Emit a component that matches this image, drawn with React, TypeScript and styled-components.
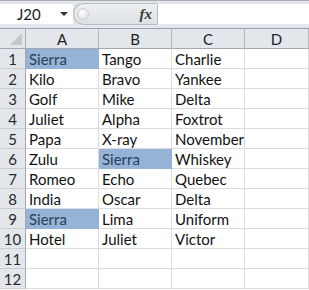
import { createGlobalStyle } from "styled-components";
import styled from "styled-components";

const GlobalStyle = createGlobalStyle`
  body {
    margin: 0;
    background: #ffffff;
    font-family: Lato, "Liberation Sans", sans-serif;
  }
`;

const Window = styled.div`
  width: 309px;
  height: 290px;
  overflow: hidden;
  background: #ffffff;
`;

const FormulaBar = styled.div`
  display: flex;
  align-items: center;
  height: 29px;
  box-sizing: border-box;
  padding: 3px 0 4px 0;
  background: #e3e6ea;
  border-top: 1px solid #a9adb3;
  border-bottom: 1px solid #9ea2a8;
`;

const NameBox = styled.div`
  width: 73px;
  height: 20px;
  box-sizing: border-box;
  background: #ffffff;
  display: flex;
  align-items: center;
  padding-left: 17px;
  font-size: 15px;
  color: #1a1a1a;
  position: relative;
`;

const DropArrow = styled.span`
  position: absolute;
  left: 60px;
  top: 8px;
  width: 0;
  height: 0;
  border-left: 4px solid transparent;
  border-right: 4px solid transparent;
  border-top: 4px solid #333333;
`;

const Splitter = styled.div`
  width: 84px;
  height: 22px;
  box-sizing: border-box;
  border: 1px solid #b9bcc1;
  border-right: none;
  border-radius: 11px 0 0 11px;
  background: linear-gradient(#eef0f2, #dde0e4);
  display: flex;
  align-items: center;
  justify-content: space-between;
  padding: 0 5px 0 3px;
`;

const Knob = styled.span`
  width: 12px;
  height: 12px;
  box-sizing: border-box;
  border-radius: 50%;
  border: 1px solid #c8cbcf;
  background: radial-gradient(circle at 40% 35%, #ffffff, #d6d9dd);
`;

const Fx = styled.span`
  font-family: "Liberation Serif", serif;
  font-style: italic;
  font-weight: bold;
  font-size: 15px;
  color: #3a3a3a;
`;

const FormulaInput = styled.div`
  flex: 1;
  height: 20px;
  background: #ffffff;
  border-left: 1px solid #b9bcc1;
`;

const Grid = styled.div`
  display: grid;
  grid-template-columns: 26px 73px 73px 73px 1fr;
  grid-auto-rows: 20px;
`;

const Corner = styled.div`
  background: #e3e6ea;
  border-right: 1px solid #a4a8ae;
  border-bottom: 1px solid #a4a8ae;
  position: relative;
`;

const CornerTriangle = styled.span`
  position: absolute;
  right: 3px;
  bottom: 3px;
  width: 0;
  height: 0;
  border-left: 12px solid transparent;
  border-bottom: 12px solid #c4c7cc;
`;

const ColHeader = styled.div`
  background: #e3e6ea;
  border-right: 1px solid #b4b8bd;
  border-bottom: 1px solid #a4a8ae;
  display: flex;
  align-items: center;
  justify-content: center;
  padding-top: 1px;
  font-size: 15px;
  color: #222222;
`;

const RowHeader = styled.div`
  background: #e3e6ea;
  border-right: 1px solid #a4a8ae;
  border-bottom: 1px solid #c9ccd1;
  display: flex;
  align-items: center;
  justify-content: center;
  padding-top: 1px;
  font-size: 15px;
  color: #2a2a2a;
`;

const Cell = styled.div<{ $filled?: boolean }>`
  background: ${(p) => (p.$filled ? "#95b3d7" : "#ffffff")};
  border-right: 1px solid ${(p) => (p.$filled ? "#95b3d7" : "#dadcdd")};
  border-bottom: 1px solid ${(p) => (p.$filled ? "#95b3d7" : "#dadcdd")};
  display: flex;
  align-items: center;
  padding: 1px 0 0 3px;
  font-size: 15px;
  color: ${(p) => (p.$filled ? "#2c3e58" : "#111111")};
  white-space: nowrap;
  overflow: hidden;
`;

const data = [
  ["Sierra", "Tango", "Charlie"],
  ["Kilo", "Bravo", "Yankee"],
  ["Golf", "Mike", "Delta"],
  ["Juliet", "Alpha", "Foxtrot"],
  ["Papa", "X-ray", "November"],
  ["Zulu", "Sierra", "Whiskey"],
  ["Romeo", "Echo", "Quebec"],
  ["India", "Oscar", "Delta"],
  ["Sierra", "Lima", "Uniform"],
  ["Hotel", "Juliet", "Victor"],
  ["", "", ""],
  ["", "", ""],
];

const columns = ["A", "B", "C", "D"];

const App = () => {
  return (
    <Window>
      <GlobalStyle />
      <FormulaBar>
        <NameBox>
          J20
          <DropArrow />
        </NameBox>
        <Splitter>
          <Knob />
          <Fx>fx</Fx>
        </Splitter>
        <FormulaInput />
      </FormulaBar>
      <Grid>
        <Corner>
          <CornerTriangle />
        </Corner>
        {columns.map((c) => (
          <ColHeader key={c}>{c}</ColHeader>
        ))}
        {data.map((row, i) => [
          <RowHeader key={`r${i}`}>{i + 1}</RowHeader>,
          ...row.map((value, j) => (
            <Cell key={`c${i}-${j}`} $filled={value === "Sierra"}>
              {value}
            </Cell>
          )),
          <Cell key={`d${i}`} />,
        ])}
      </Grid>
    </Window>
  );
};

export default App;
